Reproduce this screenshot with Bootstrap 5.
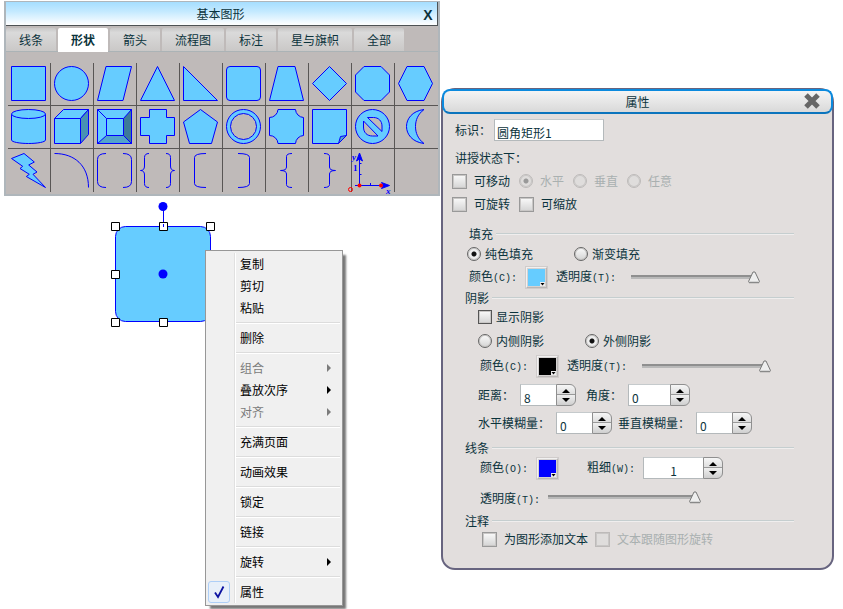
<!DOCTYPE html>
<html lang="zh-CN">
<head>
<meta charset="utf-8">
<meta name="viewport" content="width=device-width, initial-scale=1">
<title>基本图形</title>
<link href="https://cdn.jsdelivr.net/npm/bootstrap@5.3.0/dist/css/bootstrap.min.css" rel="stylesheet">
<style>
:root{--ink:#0b333c;--blue:#00f;--sky:#6cf}
body{font:12px/18px "Noto Sans CJK SC",sans-serif;color:var(--ink);background:#fff}
button,input{font:inherit;color:inherit}
.desk{display:grid;grid-template-columns:436fr 393fr;column-gap:1px;padding:1px 9px 0 4px;min-height:100vh}

/* shape palette */
.palette{background:#bfbab9;border:2px solid #afb6bb;border-top-width:1px}
.palette-title{height:24px;background:linear-gradient(#a5deff,#c3e9ff 40%,#fff);border-bottom:1px solid #4d5254;border-right:1px solid #4d5254}
.palette-close{width:18px;height:22px;font:bold 14px/24px "Liberation Sans",sans-serif}
.plain{border:0;background:none;padding:0}
.tab-strip{gap:2px;padding-top:2px;border-bottom:1px solid #abb3b6}
.tab-btn{border:0;height:23px;padding:0 13px;line-height:24px;border-radius:2px 2px 0 0;background:linear-gradient(#c8c7c7,#dadada 20%,#cac8c7)}
.tab-btn.on{background:#fff;font-weight:700;height:24px;margin-bottom:-1px}
.shape-grid{display:grid;grid-template-columns:repeat(10,1fr);margin:11px 0 2px 2px}
.shape-btn{border:0;border-right:1px solid #595655;border-bottom:1px solid #595655;background:none;padding:3px 3px 4px;height:43px;text-align:left;line-height:0}
.shape-btn:nth-child(10n){border-right:0}
.shape-btn:nth-child(n+21){border-bottom:0}
.shape-btn svg{width:35px;height:35px;overflow:visible;fill:var(--sky);stroke:var(--blue)}
.shape-btn svg.open{fill:none}

/* drawing surface */
.surface{padding:54px 0 0 201px}
.selection{position:absolute;left:106px;top:4px}
.ctx{position:relative;width:138px;background:#f0f0f0;border:1px solid #979797;padding:2px;box-shadow:4px 4px 2px -1px #777}
.ctx::before{content:"";position:absolute;left:28px;top:2px;bottom:2px;border-left:1px solid #e0e0e0;border-right:1px solid #fff}
.ctx button{position:relative;display:flex;align-items:center;width:100%;height:22px;border:0;background:none;padding:0 9px 0 32px;color:#000;text-align:left}
.ctx button:disabled{color:#7b7b7b}
.ctx .more::after{content:"";margin-left:auto;border:4px solid transparent;border-left:4px solid currentColor;border-right:0}
.ctx hr{margin:3px 0 3px 28px;border:0;border-top:1px solid #dcdcdc;border-bottom:1px solid #fff;opacity:1;height:2px}
.tick{position:absolute;left:0;top:0;width:22px;height:22px;border:1px solid #aecff7;border-radius:3px;background:#e8f0f9}

/* property window */
.props{margin-top:87px;border:2px solid #67647f;border-radius:14px;background:#e2dedd;padding-bottom:20px}
.props-title{position:relative;height:25px;margin:-1px -1px 0;border:2px solid #0b8ade;border-bottom-color:#0b74bd;border-radius:8px;background:linear-gradient(#f4f4f4,#d9d9d9)}
.props-close{position:absolute;right:10px;top:1px;line-height:0}
.sect{font-size:12px;line-height:16px;margin-bottom:0;padding:0 38px 0 22px;gap:3px;font-weight:400}
.sect::after{content:"";flex:1;border-top:1px solid #c5cecf;border-bottom:1px solid #f0eeee}
.r16{height:16px}.r18{height:18px}.r20{height:20px}.r22{height:22px}.r24{height:24px}.r26{height:26px}.r32{height:32px}.r34{height:34px}
.in9{padding-left:9px}.in24{padding-left:24px}.in26{padding-left:26px}.in35{padding-left:35px}.in37{padding-left:37px}
.g7{gap:7px}.g8{gap:8px}.g6{gap:6px}
.mt6{margin-top:6px}.mt8{margin-top:8px}
.key{font:10px/18px "Liberation Mono",monospace}
.off{color:#a9b0b0}
.tickbox,.dot{appearance:none;flex:none;width:15px;height:15px;margin:0;border:1px solid #999;background:linear-gradient(#fafafa,#d4d4d4);box-shadow:0 0 0 1px #c9c7c6 inset}
.tickbox.sharp{width:14px;height:14px;border-color:#555}
.dot{width:14px;height:14px;border-color:#666;border-radius:50%}
.dot:checked{background:radial-gradient(circle,#111 2px,#eee 3px)}
.tickbox:disabled,.dot:disabled{border-color:#bdbab9;background:#dfdddc}
.dot:checked:disabled{background:radial-gradient(circle,#999 2px,#dfdddc 3px)}
.gap-before{margin-left:2px}
.far{margin-left:41px}
.field{border:1px solid #b4b9bb;border-top-color:#c5cacc;background:#fff;height:22px;padding:5px 3px 0;line-height:16px;border-radius:0;min-width:0}
.name-field{width:110px;margin-left:3px;padding-left:2px}
.spin .field{width:36px;border-right:0}
.spin.mid .field{width:42px}
.spin.wide .field{width:60px;text-align:center}
.spin-btns{width:20px;height:22px;border:1px solid #8f8f8f;border-radius:0 6px 6px 0;background:linear-gradient(#f6f6f6,#dedede 45%,#999 46%,#999 50%,#eee 52%,#cfcfcf)}
.spin-btns button{flex:1;line-height:0}
.swatch{position:relative;flex:none;width:23px;height:23px;border:2px solid #f2f1f1;border-right-color:#b9b6b5;border-bottom-color:#b9b6b5;outline:1px solid #d0cccb;outline-offset:-1px;padding:1px;background:#d5d2d1;line-height:0}
.swatch svg{display:block;width:17px;height:17px}
.slide{appearance:none;width:130px;height:14px;margin:0 0 0 7px;background:linear-gradient(#8f8f8f,#8f8f8f 50%,#b9b9b9 50%) 0 5px/calc(100% - 8px) 4px no-repeat}
.slide.long{width:154px;margin:0 0 4px}
.slide::-webkit-slider-thumb{appearance:none;width:14px;height:14px;border:0;background:url("data:image/svg+xml,%3Csvg xmlns='http://www.w3.org/2000/svg' viewBox='0 0 14 14'%3E%3Cpath d='M6 2h2l4.5 9.500-.5 1H2l-.5-1z' fill='%23eee' stroke='%23777'/%3E%3Cpath d='M2 12.500h10' stroke='%23888' stroke-width='1.500'/%3E%3C/svg%3E")}
</style>
</head>
<body>
<main class="desk">
  <div class="d-flex flex-column">
    <section class="palette">
      <header class="palette-title d-flex align-items-center">
        <span class="flex-grow-1 text-center ps-3">基本图形</span>
        <button class="plain palette-close">X</button>
      </header>
      <nav class="tab-strip d-flex">
        <button class="tab-btn">线条</button><button class="tab-btn on">形状</button><button class="tab-btn">箭头</button><button class="tab-btn">流程图</button><button class="tab-btn">标注</button><button class="tab-btn">星与旗帜</button><button class="tab-btn">全部</button>
      </nav>
      <div class="shape-grid">
        <button class="shape-btn" aria-label="正方形"><svg viewBox="0 0 35 35"><path d="M.5.5h34v34H.5z"/></svg></button>
        <button class="shape-btn" aria-label="圆"><svg viewBox="0 0 35 35"><circle cx="17.500" cy="17.500" r="17"/></svg></button>
        <button class="shape-btn" aria-label="平行四边形"><svg viewBox="0 0 35 35"><path d="M9 .5h25.500l-8.500 34H.5z"/></svg></button>
        <button class="shape-btn" aria-label="三角形"><svg viewBox="0 0 35 35"><path d="M17.500.5l17 34H.5z"/></svg></button>
        <button class="shape-btn" aria-label="直角三角形"><svg viewBox="0 0 35 35"><path d="M.5.5v34h34z"/></svg></button>
        <button class="shape-btn" aria-label="圆角矩形"><svg viewBox="0 0 35 35"><rect x=".5" y=".5" width="34" height="34" rx="3.500"/></svg></button>
        <button class="shape-btn" aria-label="梯形"><svg viewBox="0 0 35 35"><path d="M9 .5h17l8.500 34H.5z"/></svg></button>
        <button class="shape-btn" aria-label="菱形"><svg viewBox="0 0 35 35"><path d="M17.500.5l17 17-17 17-17-17z"/></svg></button>
        <button class="shape-btn" aria-label="八边形"><svg viewBox="0 0 35 35"><path d="M9 .5h17L34.500 9v17L26 34.500H9L.5 26V9z"/></svg></button>
        <button class="shape-btn" aria-label="六边形"><svg viewBox="0 0 35 35"><path d="M9 .5h17l8.500 17-8.500 17H9l-8.500-17z"/></svg></button>

        <button class="shape-btn" aria-label="圆柱"><svg viewBox="0 0 35 35"><path d="M.5 5v26c0 2 8 3.500 17 3.500s17-1.500 17-3.500V5"/><ellipse cx="17.500" cy="5" rx="17" ry="4.500"/></svg></button>
        <button class="shape-btn" aria-label="立方体"><svg viewBox="0 0 35 35"><path d="M.5 9.500L9.500.5h25l-8 9z"/><path d="M26.500 9.500l8-9v25l-8 9z" fill="#4891b4"/><path d="M.5 9.500h26v25H.5z"/></svg></button>
        <button class="shape-btn" aria-label="棱台"><svg viewBox="0 0 35 35"><path d="M.5.5h34v34H.5z"/><path d="M34.500.5v34l-8-8v-17z" fill="#3d7a99"/><path d="M.5 34.500l9-8h17l8 8z" fill="#52a3cc"/><path d="M.5.5l9 9h17v17h-17v-17"/></svg></button>
        <button class="shape-btn" aria-label="十字形"><svg viewBox="0 0 35 35"><path d="M9.500.5h17v8h8v18h-8v8h-17v-8h-9v-18h9z"/></svg></button>
        <button class="shape-btn" aria-label="五边形"><svg viewBox="0 0 35 35"><path d="M17.500.5l17 12.500L28.500 34.500h-22L.5 13z"/></svg></button>
        <button class="shape-btn" aria-label="同心圆"><svg viewBox="0 0 35 35"><circle cx="17.500" cy="17.500" r="17"/><circle cx="17.500" cy="17.500" r="13" fill="#bfbab9"/></svg></button>
        <button class="shape-btn" aria-label="缺角矩形"><svg viewBox="0 0 35 35"><path d="M9 .5h17.500A8.500 8.500 0 0 0 34.500 8.500v18a8.500 8.500 0 0 0-8 8H9a8.500 8.500 0 0 0-8.500-8v-18A8.500 8.500 0 0 0 9 .5z"/></svg></button>
        <button class="shape-btn" aria-label="折角形"><svg viewBox="0 0 35 35"><path d="M.5.5h34v26l-8 8H.5z"/><path d="M26.500 34.500l2-7 6-1z" fill="#52a3cc"/></svg></button>
        <button class="shape-btn" aria-label="禁止符"><svg viewBox="0 0 35 35"><circle cx="17.500" cy="17.500" r="17"/><path d="M12.500 8.500h6c5 0 8.500 3.500 8.500 8.500v5.500zM8.500 12l14.500 15h-5.500c-5.500 0-9-3.500-9-9z" fill="#bfbab9"/></svg></button>
        <button class="shape-btn" aria-label="新月形"><svg viewBox="0 0 35 35"><path d="M26 .5C14 2 8.500 10 8.500 17.500S14 33 26 34.500c-6-4.500-8.500-10.500-8.500-17S20 5 26 .5z"/></svg></button>

        <button class="shape-btn" aria-label="闪电形"><svg viewBox="0 0 35 35"><path d="M13 .5L23.300 9l-5.600 3L26 19l-4 2.300 12.500 13.200-19.200-11 3-2.200-9.300-5.800 2.700-2.200L.5 5.500z"/></svg></button>
        <button class="shape-btn" aria-label="弧"><svg class="open" viewBox="0 0 35 35"><path d="M.5.5c20 0 34 12 34 34"/></svg></button>
        <button class="shape-btn" aria-label="双括号"><svg class="open" viewBox="0 0 35 35"><path d="M9 .5Q.5.5.5 6.500v22q0 6 8.500 6M26 .5q8.500 0 8.500 6v22q0 6-8.500 6"/></svg></button>
        <button class="shape-btn" aria-label="双大括号"><svg class="open" viewBox="0 0 35 35"><path d="M9 .5q-4.500 0-4.500 4V13q0 4.500-4 4.500 4 0 4 4.500v8.500q0 4 4.500 4M26 .5q4.500 0 4.500 4V13q0 4.500 4 4.500-4 0-4 4.500v8.500q0 4-4.500 4"/></svg></button>
        <button class="shape-btn" aria-label="左括号"><svg class="open" viewBox="0 0 35 35"><path d="M23 .5q-11.500 0-11.500 4v26q0 4 11.500 4"/></svg></button>
        <button class="shape-btn" aria-label="右括号"><svg class="open" viewBox="0 0 35 35"><path d="M12 .5q11.500 0 11.500 4v26q0 4-11.500 4"/></svg></button>
        <button class="shape-btn" aria-label="左大括号"><svg class="open" viewBox="0 0 35 35"><path d="M23 .5q-5.500 0-5.500 3V14q0 3.500-6 3.500 6 0 6 3.500v10.500q0 3 5.500 3"/></svg></button>
        <button class="shape-btn" aria-label="右大括号"><svg class="open" viewBox="0 0 35 35"><path d="M12 .5q5.500 0 5.500 3V14q0 3.500 6 3.500-6 0-6 3.500v10.500q0 3-5.500 3"/></svg></button>
        <button class="shape-btn" aria-label="坐标系"><svg viewBox="0 0 35 35"><path d="M4.500 33V3M0 32.500h30M4.500 10.500h2M4.500 21.500h2M15.500 32v-2"/><path d="M4.500 0l3 8-3-2-3 2zM34.500 32.500l-8-3 2 3-2 3z" fill="#00f"/><g fill="#f00" stroke="none"><circle cx="4.500" cy="32.500" r="2"/><circle cx="26" cy="32.500" r="2"/></g><circle cx="-4.500" cy="36.500" r="2" fill="none" stroke="red"/><g fill="#00f" stroke="none" font-family="Liberation Serif,serif" font-size="9" font-weight="bold"><text x="-3" y="7" font-style="italic">y</text><text x="-2" y="18">1</text><text x="31" y="41" font-style="italic">x</text></g></svg></button>
        <button class="shape-btn" aria-label="空"></button>
      </div>
    </section>

    <section class="surface position-relative flex-grow-1">
      <svg class="selection" width="106" height="128" viewBox="110 200 106 128">
        <rect x="115.500" y="226.500" width="95" height="95" rx="10" fill="#6cf" stroke="#00f"/>
        <path d="M163.500 206v21" stroke="#00f"/>
        <circle cx="163" cy="206.500" r="4.500" fill="#00f"/><circle cx="163" cy="274" r="4.500" fill="#00f"/>
        <g fill="#fff" stroke="#000"><path d="M111.500 222.500h8v8h-8zM159.500 222.500h8v8h-8zM206.500 222.500h8v8h-8zM111.500 270.500h8v8h-8zM111.500 318.500h8v8h-8zM159.500 318.500h8v8h-8z"/></g>
        <path d="M163.500 224v3" stroke="#00f"/>
      </svg>
      <div class="ctx">
        <button>复制</button><button>剪切</button><button>粘贴</button><hr>
        <button>删除</button><hr>
        <button class="more" disabled>组合</button><button class="more">叠放次序</button><button class="more" disabled>对齐</button><hr>
        <button>充满页面</button><hr>
        <button>动画效果</button><hr>
        <button>锁定</button><hr>
        <button>链接</button><hr>
        <button class="more">旋转</button><hr>
        <button><svg class="tick" viewBox="0 0 20 20"><path d="M6 10.500l3 4.500 5.500-10.500" fill="none" stroke="#0c12a1" stroke-width="1.800"/></svg>属性</button>
      </div>
    </section>
  </div>

  <form class="props align-self-start">
    <header class="props-title d-flex align-items-center justify-content-center">
      <span>属性</span>
      <button type="button" class="plain props-close" aria-label="关闭"><svg width="18" height="18" viewBox="0 0 18 18"><path d="M3 3l12 12M15 3L3 15" stroke="#666" stroke-width="5"/></svg></button>
    </header>
    <div class="d-flex align-items-center r32 ps-2 ms-1"><label for="nm">标识：</label><input id="nm" class="field name-field" value="圆角矩形1"></div>
    <div class="d-flex align-items-center r24 ps-2 ms-1">讲授状态下：</div>
    <div class="d-flex align-items-center r22 in9 g7">
      <input type="checkbox" class="tickbox" id="mv"><label for="mv">可移动</label>
      <input type="radio" class="dot gap-before" id="h" name="dir" checked disabled><label class="off" for="h">水平</label>
      <input type="radio" class="dot gap-before" id="v" name="dir" disabled><label class="off" for="v">垂直</label>
      <input type="radio" class="dot gap-before" id="a" name="dir" disabled><label class="off" for="a">任意</label>
    </div>
    <div class="d-flex align-items-center r24 in9 g7">
      <input type="checkbox" class="tickbox" id="rt"><label for="rt">可旋转</label>
      <input type="checkbox" class="tickbox gap-before" id="sc"><label for="sc">可缩放</label>
    </div>

    <h2 class="sect d-flex align-items-center r20 mt8 in26">填充</h2>
    <div class="d-flex align-items-center r20 in24">
      <input type="radio" class="dot" id="f1" name="fill" checked><label class="ms-1" for="f1">纯色填充</label>
      <input type="radio" class="dot far" id="f2" name="fill"><label class="ms-1" for="f2">渐变填充</label>
    </div>
    <div class="d-flex align-items-center r26 in26 g8">
      <label for="c1">颜色<span class="key">(C):</span></label>
      <button type="button" id="c1" class="swatch"><svg viewBox="0 0 17 17"><path d="M0 0h17v13h-5v4H0z" fill="#6cf"/><path d="M12 13h5v4h-5z" fill="#eee"/><path d="M12.500 14h4l-2 2.500z" fill="#000"/></svg></button>
      <label for="t1">透明度<span class="key">(T):</span></label><input type="range" class="slide" id="t1" value="100">
    </div>

    <h2 class="sect d-flex align-items-center r16">阴影</h2>
    <div class="d-flex align-items-center r22 in35">
      <input type="checkbox" class="tickbox sharp" id="sh"><label class="ms-1" for="sh">显示阴影</label>
    </div>
    <div class="d-flex align-items-center r26 in35">
      <input type="radio" class="dot" id="s1" name="side"><label class="ms-1" for="s1">内侧阴影</label>
      <input type="radio" class="dot far" id="s2" name="side" checked><label class="ms-1" for="s2">外侧阴影</label>
    </div>
    <div class="d-flex align-items-center r24 in37 g8">
      <label for="c2">颜色<span class="key">(C):</span></label>
      <button type="button" id="c2" class="swatch"><svg viewBox="0 0 17 17"><path d="M0 0h17v13h-5v4H0z" fill="#000"/><path d="M12 13h5v4h-5z" fill="#eee"/><path d="M12.500 14h4l-2 2.500z" fill="#000"/></svg></button>
      <label for="t2">透明度<span class="key">(T):</span></label><input type="range" class="slide" id="t2" value="100">
    </div>
    <div class="d-flex align-items-center r34 in35 g6">
      <label for="d1">距离：</label><span class="spin d-flex"><input id="d1" class="field" value="8"><span class="spin-btns d-flex flex-column"><button type="button" class="plain" aria-label="增加"><svg width="8" height="5"><path d="M0 5l4-4 4 4z"/></svg></button><button type="button" class="plain" aria-label="减少"><svg width="8" height="5"><path d="M0 0l4 4 4-4z"/></svg></button></span></span>
      <label class="ms-1" for="d2">角度：</label><span class="spin mid d-flex"><input id="d2" class="field" value="0"><span class="spin-btns d-flex flex-column"><button type="button" class="plain" aria-label="增加"><svg width="8" height="5"><path d="M0 5l4-4 4 4z"/></svg></button><button type="button" class="plain" aria-label="减少"><svg width="8" height="5"><path d="M0 0l4 4 4-4z"/></svg></button></span></span>
    </div>
    <div class="d-flex align-items-center r22 in35 g6">
      <label for="b1">水平模糊量：</label><span class="spin d-flex"><input id="b1" class="field" value="0"><span class="spin-btns d-flex flex-column"><button type="button" class="plain" aria-label="增加"><svg width="8" height="5"><path d="M0 5l4-4 4 4z"/></svg></button><button type="button" class="plain" aria-label="减少"><svg width="8" height="5"><path d="M0 0l4 4 4-4z"/></svg></button></span></span>
      <label for="b2">垂直模糊量：</label><span class="spin d-flex"><input id="b2" class="field" value="0"><span class="spin-btns d-flex flex-column"><button type="button" class="plain" aria-label="增加"><svg width="8" height="5"><path d="M0 5l4-4 4 4z"/></svg></button><button type="button" class="plain" aria-label="减少"><svg width="8" height="5"><path d="M0 0l4 4 4-4z"/></svg></button></span></span>
    </div>

    <h2 class="sect d-flex align-items-center r16 mt6">线条</h2>
    <div class="d-flex align-items-center r24 in37 g8">
      <label for="c3">颜色<span class="key">(O):</span></label>
      <button type="button" id="c3" class="swatch"><svg viewBox="0 0 17 17"><path d="M0 0h17v13h-5v4H0z" fill="#00f"/><path d="M12 13h5v4h-5z" fill="#eee"/><path d="M12.500 14h4l-2 2.500z" fill="#000"/></svg></button>
      <label class="ms-3 ps-1" for="w">粗细<span class="key">(W):</span></label><span class="spin wide d-flex"><input id="w" class="field" value="1"><span class="spin-btns d-flex flex-column"><button type="button" class="plain" aria-label="增加"><svg width="8" height="5"><path d="M0 5l4-4 4 4z"/></svg></button><button type="button" class="plain" aria-label="减少"><svg width="8" height="5"><path d="M0 0l4 4 4-4z"/></svg></button></span></span>
    </div>
    <div class="d-flex align-items-center r26 mt6 in37 g8">
      <label for="t3">透明度<span class="key">(T):</span></label><input type="range" class="slide long" id="t3" value="100">
    </div>

    <h2 class="sect d-flex align-items-center r18">注释</h2>
    <div class="d-flex align-items-center r18 in35 g7">
      <input type="checkbox" class="tickbox ms-1" id="n1"><label for="n1">为图形添加文本</label>
      <input type="checkbox" class="tickbox" id="n2" disabled><label class="off" for="n2">文本跟随图形旋转</label>
    </div>
  </form>
</main>
<script src="https://cdn.jsdelivr.net/npm/bootstrap@5.3.0/dist/js/bootstrap.bundle.min.js"></script>
</body>
</html>
